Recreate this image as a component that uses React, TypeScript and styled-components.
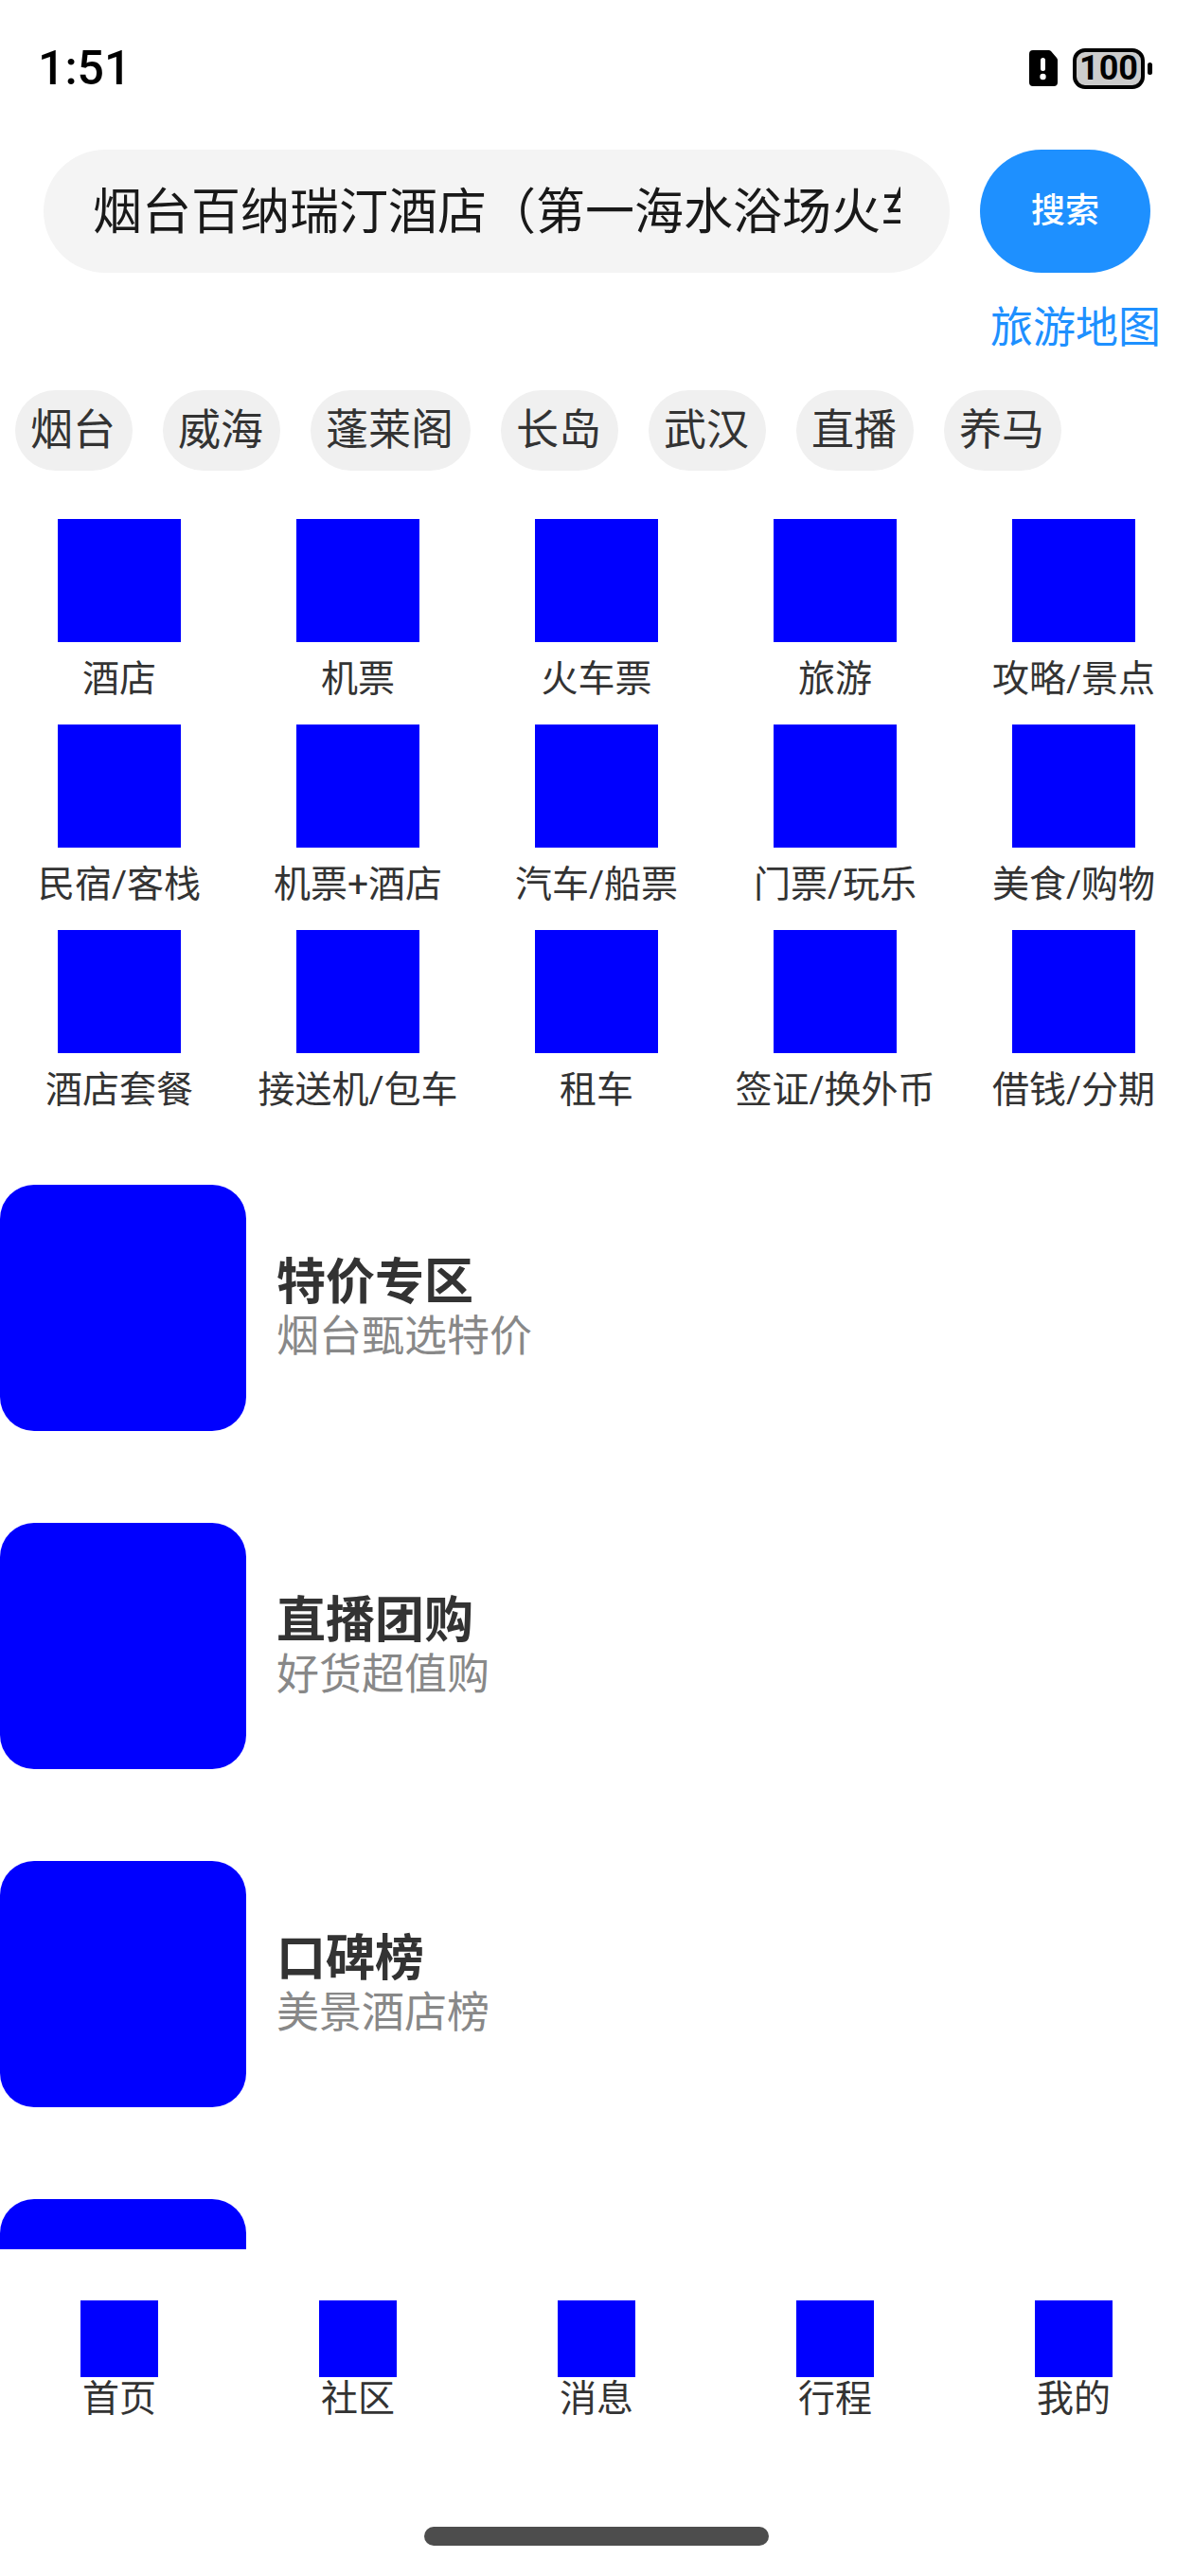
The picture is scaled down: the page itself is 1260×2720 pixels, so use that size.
import React, { useState } from "react";
import styled, { createGlobalStyle } from "styled-components";

const GlobalStyle = createGlobalStyle`
  *, *::before, *::after {
    box-sizing: border-box;
  }
  body {
    margin: 0;
    background: #ffffff;
    color: #333333;
    font-family: Roboto, "Noto Sans CJK SC", sans-serif;
  }
  button, input {
    margin: 0;
    border: 0;
    font-family: inherit;
  }
  ul {
    margin: 0;
    padding: 0;
    list-style: none;
  }
`;

const Page = styled.div`
  display: flex;
  flex-direction: column;
  height: 100vh;
  overflow: hidden;
`;

const StatusBar = styled.header`
  display: flex;
  flex: none;
  align-items: center;
  justify-content: space-between;
  height: 144px;
  padding: 0 43px 0 40px;
  color: #000000;
`;

const Clock = styled.time`
  font-size: 50px;
  font-weight: 500;
  line-height: 61px;
`;

const StatusIcons = styled.div`
  display: flex;
  align-items: center;
  gap: 16px;
`;

const Battery = styled.div`
  display: flex;
  align-items: center;
  gap: 3px;
`;

const BatteryBody = styled.div`
  display: flex;
  align-items: center;
  justify-content: center;
  width: 76px;
  height: 43px;
  border: 4px solid #000000;
  border-radius: 13px;
  background: #cccccc;
  font-size: 36px;
  font-weight: 700;
  line-height: 35px;
`;

const BatteryTip = styled.div`
  width: 5px;
  height: 13px;
  border-radius: 3px;
  background: #000000;
`;

const SearchForm = styled.form`
  display: flex;
  flex: none;
  gap: 32px;
  padding: 14px 45px 0 46px;
`;

const SearchInput = styled.input`
  flex: 1;
  min-width: 0;
  height: 130px;
  padding: 0 52px 8px;
  border-radius: 65px;
  outline: none;
  background: #f4f4f4;
  color: #191919;
  font-size: 52px;
  line-height: 61px;
`;

const SearchButton = styled.button`
  width: 180px;
  height: 130px;
  padding: 0;
  border-radius: 65px;
  background: #1e90ff;
  color: #ffffff;
  font-size: 36px;
  font-weight: 500;
  line-height: 46px;
`;

const MapLink = styled.a`
  flex: none;
  align-self: flex-end;
  margin: 32px 34px 39px 0;
  color: #1e90ff;
  font-size: 45px;
  line-height: 53px;
  text-decoration: none;
`;

const Chips = styled.div`
  display: flex;
  flex: none;
  gap: 32px;
  padding: 0 16px;
`;

const Chip = styled.button`
  padding: 16px 18px 16px 16px;
  border-radius: 43px;
  background: #f0f0f0;
  color: #333333;
  font-size: 45px;
  line-height: 53px;
  white-space: nowrap;
`;

const ServiceGrid = styled.div`
  display: grid;
  flex: none;
  grid-template-columns: repeat(5, 1fr);
  row-gap: 25px;
  padding: 51px 0 77px;
`;

const IconButton = styled.button<{ $gap: number }>`
  display: flex;
  flex-direction: column;
  align-items: center;
  gap: ${(p) => p.$gap}px;
  padding: 0;
  background: transparent;
  color: #333333;
  font-size: 39px;
  line-height: 46px;
  white-space: nowrap;
`;

const ServiceIcon = styled.span`
  width: 130px;
  height: 130px;
  background: #0000ff;
`;

const DealList = styled.ul`
  display: flex;
  flex: 1;
  flex-direction: column;
  gap: 97px;
  min-height: 0;
  overflow: hidden;
`;

const Deal = styled.li`
  display: flex;
  flex: none;
  align-items: center;
  gap: 32px;
`;

const DealImage = styled.div`
  width: 260px;
  height: 260px;
  border-radius: 36px;
  background: #0000ff;
`;

const DealTitle = styled.h2`
  margin: 0;
  font-size: 52px;
  font-weight: 700;
  line-height: 61px;
`;

const DealNote = styled.p`
  margin: 0;
  color: #888888;
  font-size: 45px;
  line-height: 53px;
`;

const TabBar = styled.nav`
  display: grid;
  flex: none;
  grid-template-columns: repeat(5, 1fr);
  padding: 54px 0 112px;
`;

const TabIcon = styled.span`
  width: 82px;
  height: 81px;
  background: #0000ff;
`;

const HomeIndicator = styled.div`
  flex: none;
  align-self: center;
  width: 364px;
  height: 20px;
  margin-bottom: 32px;
  border-radius: 10px;
  background: #4d4d4d;
`;

const cities = ["烟台", "威海", "蓬莱阁", "长岛", "武汉", "直播", "养马"];

const services = [
  "酒店", "机票", "火车票", "旅游", "攻略/景点",
  "民宿/客栈", "机票+酒店", "汽车/船票", "门票/玩乐", "美食/购物",
  "酒店套餐", "接送机/包车", "租车", "签证/换外币", "借钱/分期",
];

const deals: { title?: string; note?: string }[] = [
  { title: "特价专区", note: "烟台甄选特价" },
  { title: "直播团购", note: "好货超值购" },
  { title: "口碑榜", note: "美景酒店榜" },
  {},
];

const tabs = ["首页", "社区", "消息", "行程", "我的"];

function SimAlertIcon() {
  return (
    <svg width="30" height="38" viewBox="0 0 30 38" aria-hidden="true">
      <path
        d="M4 0H20.5Q22 0 23 1L29 8Q30 9 30 10.500V34Q30 38 26 38H4Q0 38 0 34V4Q0 0 4 0Z"
        fill="#000000"
      />
      <rect x="12" y="8" width="5" height="14" rx="2.500" fill="#ffffff" />
      <circle cx="14.500" cy="28" r="3.200" fill="#ffffff" />
    </svg>
  );
}

export default function App() {
  const [query, setQuery] = useState("烟台百纳瑞汀酒店（第一海水浴场火车");

  return (
    <Page>
      <GlobalStyle />
      <StatusBar>
        <Clock>1:51</Clock>
        <StatusIcons>
          <SimAlertIcon />
          <Battery>
            <BatteryBody>100</BatteryBody>
            <BatteryTip />
          </Battery>
        </StatusIcons>
      </StatusBar>

      <SearchForm onSubmit={(e) => e.preventDefault()}>
        <SearchInput
          type="text"
          aria-label="搜索"
          value={query}
          onChange={(e) => setQuery(e.target.value)}
        />
        <SearchButton type="submit">搜索</SearchButton>
      </SearchForm>
      <MapLink href="#map">旅游地图</MapLink>

      <Chips>
        {cities.map((city) => (
          <Chip key={city} type="button">{city}</Chip>
        ))}
      </Chips>

      <ServiceGrid>
        {services.map((name) => (
          <IconButton key={name} type="button" $gap={16}>
            <ServiceIcon />
            <span>{name}</span>
          </IconButton>
        ))}
      </ServiceGrid>

      <DealList>
        {deals.map((deal, i) => (
          <Deal key={i}>
            <DealImage />
            {deal.title && (
              <div>
                <DealTitle>{deal.title}</DealTitle>
                <DealNote>{deal.note}</DealNote>
              </div>
            )}
          </Deal>
        ))}
      </DealList>

      <TabBar>
        {tabs.map((name) => (
          <IconButton key={name} type="button" $gap={0}>
            <TabIcon />
            <span>{name}</span>
          </IconButton>
        ))}
      </TabBar>
      <HomeIndicator />
    </Page>
  );
}
